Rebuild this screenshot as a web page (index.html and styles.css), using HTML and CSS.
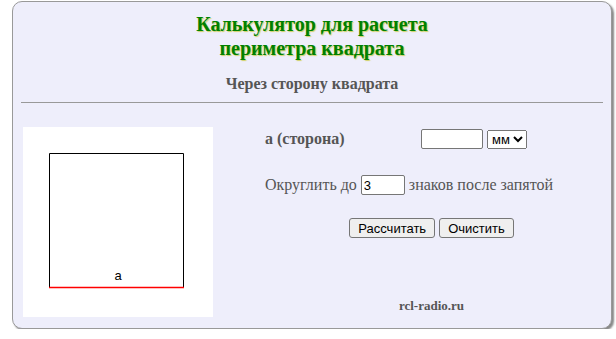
FILE: index.html
```html
<!DOCTYPE html>
<html lang="ru">
<head>
  <meta charset="UTF-8">
  <title>Калькулятор периметра квадрата</title>
  <link rel="stylesheet" href="styles.css">
</head>
<body>
  <div class="calc">
    <h1>Калькулятор для расчета<br>периметра квадрата</h1>
    <h2>Через сторону квадрата</h2>
    <hr>

    <div class="calc-body">
      <div class="picture">
        <svg width="190" height="190" viewBox="0 0 190 190">
          <path d="M26.5 160 V26.5 H160.5 V160" fill="none" stroke="#000" stroke-width="1"/>
          <path d="M26 160.5 H161" fill="none" stroke="#ff0000" stroke-width="1.5"/>
          <text x="95" y="153" font-family="Liberation Sans, Arial, sans-serif" font-size="13" text-anchor="middle">a</text>
        </svg>
      </div>

      <div class="form">
        <div class="row side">
          <span class="label">а (сторона)</span>
          <input type="text" class="value">
          <select class="unit">
            <option>мм</option>
            <option>см</option>
            <option>м</option>
          </select>
        </div>
        <div class="row round">
          Округлить до <input type="text" class="digits" value="3"> знаков после запятой
        </div>
        <div class="buttons">
          <button type="button">Рассчитать</button>
          <button type="button">Очистить</button>
        </div>
        <div class="site">rcl-radio.ru</div>
      </div>
    </div>
  </div>
</body>
</html>
```

FILE: styles.css
```css
body {
  margin: 0;
  font-family: "Liberation Serif", "Times New Roman", serif;
}

.calc {
  width: 598px;
  height: 326px;
  margin: 1px 0 0 12px;
  background: #eeeefb;
  border: 1px solid #999;
  border-radius: 10px;
  box-shadow: 2px 2px 2px #888;
}

h1 {
  margin: 10px 0 0;
  font-size: 20px;
  line-height: 24px;
  text-align: center;
  color: #008000;
  text-shadow: 1px 1px 1px rgba(190, 190, 0, 0.6);
}

h2 {
  margin: 14px 0 0;
  font-size: 16px;
  line-height: 20px;
  text-align: center;
  color: #555;
}

hr {
  margin: 8px 8px 0 8px;
  border: none;
  border-top: 1px solid #999;
}

.calc-body {
  display: flex;
  margin-top: 24px;
  padding-left: 10px;
}

.picture {
  width: 190px;
  height: 190px;
  background: #fff;
}

.picture svg {
  display: block;
}

.form {
  width: 360px;
  margin-left: 39px;
  font-size: 16px;
  color: #555;
}

.row {
  display: flex;
  align-items: center;
  padding-left: 13px;
}

.side {
  margin-top: 2px;
  height: 20px;
}

.label {
  width: 156px;
  font-weight: bold;
}

input {
  height: 20px;
  box-sizing: border-box;
  border: 1px solid #767676;
  border-radius: 2px;
  font-family: "Liberation Sans", Arial, sans-serif;
  font-size: 13px;
  padding: 1px 2px;
}

.value {
  width: 62px;
}

.unit {
  margin-left: 4px;
  height: 19px;
  font-family: "Liberation Sans", Arial, sans-serif;
  font-size: 13px;
}

.round {
  margin-top: 26px;
  height: 20px;
}

.digits {
  width: 44px;
  margin: 0 4px;
}

.buttons {
  display: flex;
  justify-content: center;
  gap: 4px;
  margin-top: 23px;
}

button {
  height: 20px;
  padding: 1px 8px;
  font-family: "Liberation Sans", Arial, sans-serif;
  font-size: 13px;
  color: #000;
  background: #efefef;
  border: 1px solid #767676;
  border-radius: 3px;
}

.site {
  margin-top: 60px;
  text-align: center;
  font-size: 13px;
  font-weight: bold;
  color: #555;
}
```
